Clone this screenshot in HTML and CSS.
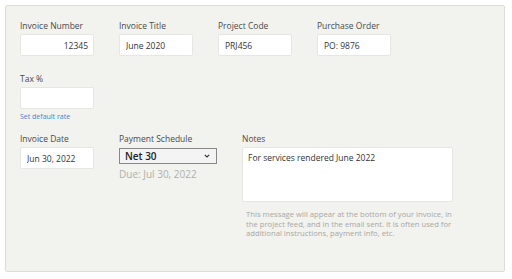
FILE: index.html
```html
<!DOCTYPE html>
<html lang="en">
<head>
  <meta charset="UTF-8">
  <title>Invoice Settings</title>
  <link rel="stylesheet" href="styles.css">
</head>
<body>
  <div class="invoice-panel">
    <div class="field-row">
      <div class="field">
        <label>Invoice Number</label>
        <input type="text" class="text-input num" value="12345">
      </div>
      <div class="field">
        <label>Invoice Title</label>
        <input type="text" class="text-input" value="June 2020">
      </div>
      <div class="field">
        <label>Project Code</label>
        <input type="text" class="text-input" value="PRJ456">
      </div>
      <div class="field">
        <label>Purchase Order</label>
        <input type="text" class="text-input" value="PO: 9876">
      </div>
    </div>

    <div class="field-row tax-row">
      <div class="field">
        <label>Tax %</label>
        <input type="text" class="text-input" value="">
        <a href="#" class="set-default">Set default rate</a>
      </div>
    </div>

    <div class="field-row bottom-row">
      <div class="field">
        <label>Invoice Date</label>
        <input type="text" class="text-input" value="Jun 30, 2022">
      </div>
      <div class="field schedule">
        <label>Payment Schedule</label>
        <div class="select-box">
          <span>Net 30</span>
          <svg width="8" height="6" viewBox="0 0 8 6"><path d="M1.8 1.8 L4 4 L6.2 1.8" fill="none" stroke="#333" stroke-width="1.1"/></svg>
        </div>
        <div class="due">Due: Jul 30, 2022</div>
      </div>
      <div class="field notes">
        <label>Notes</label>
        <div class="notes-box">For services rendered June 2022</div>
        <p class="help">This message will appear at the bottom of your invoice, in the project feed, and in the email sent. It is often used for additional instructions, payment info, etc.</p>
      </div>
    </div>
  </div>
</body>
</html>
```

FILE: styles.css
```css
body {
  margin: 0;
  padding: 5px;
  background-color: #ffffff;
  font-family: "Open Sans", sans-serif;
  color: #333333;
}
.invoice-panel {
  width: 500px;
  height: 267px;
  box-sizing: border-box;
  background-color: #f2f2ef;
  border: 1px solid #dcdcd8;
  border-radius: 2px;
  padding: 14px 0 0 14px;
}
.field-row {
  display: flex;
  gap: 25px;
}
.field {
  display: flex;
  flex-direction: column;
  width: 74px;
}
.field label {
  font-size: 8.5px;
  line-height: 12px;
  color: #4a4a4a;
  margin-bottom: 2px;
}
.text-input {
  box-sizing: border-box;
  width: 74px;
  height: 22px;
  border: 1px solid #e6e6e2;
  border-radius: 2px;
  background: #ffffff;
  font-family: "Open Sans", sans-serif;
  font-size: 8.5px;
  color: #333333;
  padding: 0 6px;
  outline: none;
}
.text-input.num {
  text-align: right;
  padding-right: 5px;
}
.tax-row {
  margin-top: 17px;
}
.set-default {
  font-size: 7px;
  line-height: 11px;
  color: #3b87d4;
  text-decoration: none;
  margin-top: 2px;
}
.bottom-row {
  margin-top: 11px;
}
.schedule {
  width: 98px;
}
.select-box {
  box-sizing: border-box;
  height: 16px;
  margin-top: 1px;
  border: 1px solid #888888;
  background: #f4f4f4;
  display: flex;
  align-items: center;
  justify-content: space-between;
  padding: 0 5px 0 5px;
  font-size: 10px;
  font-weight: 600;
  color: #222222;
}
.due {
  font-size: 10px;
  line-height: 14px;
  color: #b0b0ac;
  margin-top: 3px;
}
.notes {
  width: 211px;
}
.notes-box {
  box-sizing: border-box;
  height: 55px;
  border: 1px solid #e6e6e2;
  border-radius: 2px;
  background: #ffffff;
  font-size: 8.5px;
  line-height: 12px;
  padding: 4px 5px;
  color: #333333;
}
.help {
  margin: 8px 0 0 4px;
  font-size: 7.7px;
  line-height: 9.5px;
  color: #a8a8a4;
}
```
